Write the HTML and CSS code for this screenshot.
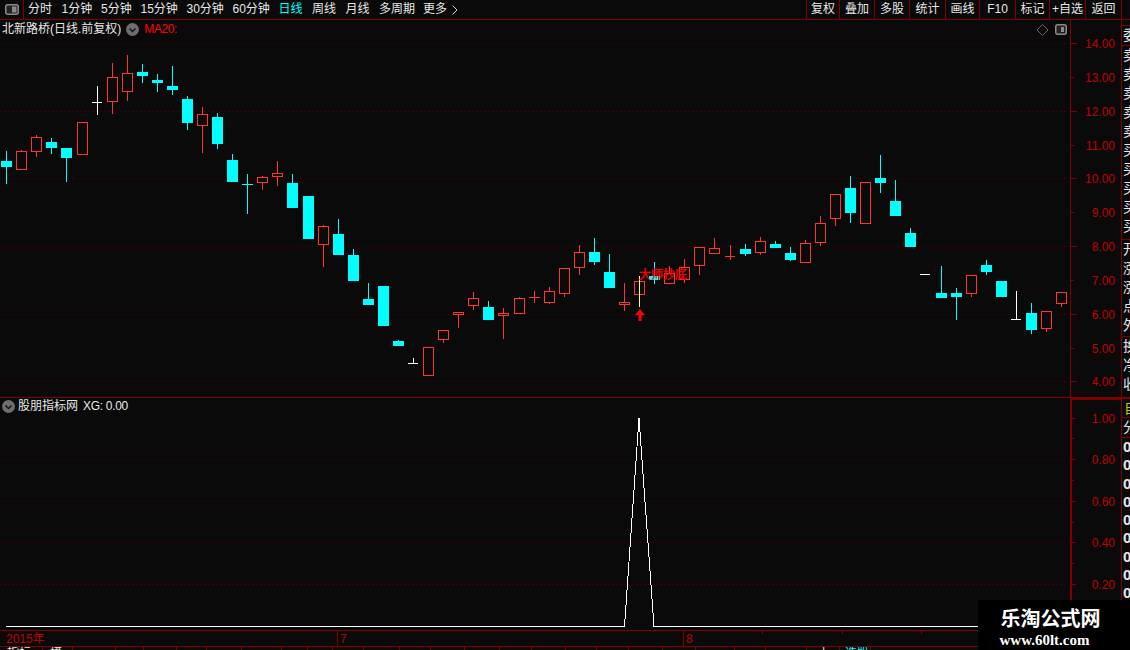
FILE: index.html
```html
<!DOCTYPE html>
<html lang="zh">
<head>
<meta charset="utf-8">
<title>北新路桥 日线</title>
<link rel="stylesheet" href="styles.css">
</head>
<body>
<div class="app">
  <header class="toolbar">
    <div class="layout-btn"><svg width="14" height="11" viewBox="0 0 14 11"><rect x="0.750" y="0.750" width="12.500" height="9.500" rx="2" class="ico-frame"/><rect x="7" y="2.500" width="4.500" height="6" class="ico-fill"/></svg></div>
    <nav class="periods">
      <span class="p p-w2">分时</span><span class="p p-w3">1分钟</span><span class="p p-w3">5分钟</span><span class="p p-w4">15分钟</span><span class="p p-w4">30分钟</span><span class="p p-w4">60分钟</span><span class="p p-w2 active">日线</span><span class="p p-w2">周线</span><span class="p p-w2">月线</span><span class="p p-w3b">多周期</span><span class="p more">更多<svg class="more-ico" width="6" height="10" viewBox="0 0 6 10"><path d="M0.500 0.500L5 5L0.500 9.500"/></svg></span>
    </nav>
    <nav class="actions">
      <span class="a">复权</span><span class="a">叠加</span><span class="a">多股</span><span class="a">统计</span><span class="a">画线</span><span class="a">F10</span><span class="a">标记</span><span class="a">+自选</span><span class="a">返回</span>
    </nav>
    <div class="corner"></div>
  </header>

  <div class="workspace">
    <div class="charts">
      <section class="pane pane-main">
        <svg class="plot" width="1121" height="377" viewBox="0 20 1121 377">
          <path class="grid" d="M0 43.500H1068M0 111.500H1068M0 178.500H1068M0 246.500H1068M0 314.500H1068M0 381.500H1068"/>
          <path class="wick-up" d="M21.500 150V170M36.500 135V157M112.500 63V114M127.500 55V101M202.500 107V153M262.500 176V190M277.500 161V186M323.500 225V267M443.500 330V343M458.500 312V328M473.500 292V310M503.500 308V339M519.500 297V314M534.500 291V303M549.500 287V304M564.500 268V297M579.500 245V275M624.500 283V311M669.500 266V284M684.500 259V283M699.500 247V275M714.500 238V254M730.500 245V260M760.500 237V255M805.500 240V263M820.500 216V246M835.500 194V226M971.500 275V297M1046.500 311V332M1061.500 292V307"/>
          <path class="wick-dn" d="M6.500 151V184M51.500 138V154M66.500 148V182M142.500 64V83M157.500 74V92M172.500 66V95M187.500 96V130M217.500 113V149M232.500 154V182M247.500 174V214M292.500 174V208M338.500 219V255M353.500 249V281M368.500 283V305M398.500 340V346M488.500 301V320M594.500 238V265M609.500 254V288M654.500 262V284M745.500 244V256M775.500 241V248M790.500 247V261M850.500 176V223M880.500 155V193M895.500 180V216M910.500 228V247M941.500 266V298M956.500 288V320M986.500 260V275M1031.500 303V334"/>
          <path class="wick-flat" d="M97.500 86V115M413.500 358V363M1016.500 291V319"/>
          <path class="cross-flat" d="M92 102.500H102M408 363.500H418M920 274.500H930M1011 319.500H1021"/>
          <path class="cross-dn" d="M242 184.500H253"/>
          <path class="cross-up" d="M529 297.500H540M725 256.500H735"/>
          <g class="body-up">
            <rect x="16.500" y="151.500" width="10" height="18"/><rect x="31.500" y="137.500" width="10" height="14"/><rect x="77.500" y="122.500" width="10" height="32"/><rect x="107.500" y="77.500" width="10" height="24"/><rect x="122.500" y="73.500" width="10" height="18"/><rect x="197.500" y="114.500" width="10" height="11"/><rect x="257.500" y="177.500" width="10" height="5"/><rect x="272.500" y="173.500" width="10" height="3"/><rect x="318.500" y="226.500" width="10" height="18"/><rect x="423.500" y="347.500" width="10" height="28"/><rect x="438.500" y="330.500" width="10" height="9"/><rect x="453.500" y="312.500" width="10" height="2"/><rect x="468.500" y="298.500" width="10" height="7"/><rect x="498.500" y="313.500" width="10" height="2"/><rect x="514.500" y="298.500" width="10" height="15"/><rect x="544.500" y="291.500" width="10" height="11"/><rect x="559.500" y="268.500" width="10" height="25"/><rect x="574.500" y="252.500" width="10" height="15"/><rect x="619.500" y="302.500" width="10" height="2"/><rect x="634.500" y="281.500" width="10" height="13"/><rect x="664.500" y="273.500" width="10" height="10"/><rect x="679.500" y="267.500" width="10" height="12"/><rect x="694.500" y="247.500" width="10" height="18"/><rect x="709.500" y="248.500" width="10" height="5"/><rect x="755.500" y="241.500" width="10" height="11"/><rect x="800.500" y="243.500" width="10" height="19"/><rect x="815.500" y="223.500" width="10" height="19"/><rect x="830.500" y="194.500" width="10" height="24"/><rect x="860.500" y="182.500" width="10" height="41"/><rect x="966.500" y="275.500" width="10" height="18"/><rect x="1041.500" y="311.500" width="10" height="17"/><rect x="1056.500" y="292.500" width="10" height="11"/>
          </g>
          <g class="body-dn">
            <rect x="1" y="161" width="11" height="6"/><rect x="46" y="142" width="11" height="6"/><rect x="61" y="148" width="11" height="10"/><rect x="137" y="72" width="11" height="4"/><rect x="152" y="80" width="11" height="3"/><rect x="167" y="86" width="11" height="4"/><rect x="182" y="99" width="11" height="24"/><rect x="212" y="117" width="11" height="27"/><rect x="227" y="160" width="11" height="22"/><rect x="287" y="183" width="11" height="25"/><rect x="303" y="196" width="11" height="43"/><rect x="333" y="234" width="11" height="21"/><rect x="348" y="255" width="11" height="26"/><rect x="363" y="299" width="11" height="6"/><rect x="378" y="286" width="11" height="40"/><rect x="393" y="341" width="11" height="5"/><rect x="483" y="307" width="11" height="13"/><rect x="589" y="252" width="11" height="10"/><rect x="604" y="272" width="11" height="16"/><rect x="649" y="276" width="11" height="4"/><rect x="740" y="249" width="11" height="5"/><rect x="770" y="244" width="11" height="4"/><rect x="785" y="253" width="11" height="7"/><rect x="845" y="188" width="11" height="25"/><rect x="875" y="178" width="11" height="5"/><rect x="890" y="201" width="11" height="15"/><rect x="905" y="233" width="11" height="14"/><rect x="936" y="293" width="11" height="5"/><rect x="951" y="293" width="11" height="4"/><rect x="981" y="265" width="11" height="7"/><rect x="996" y="281" width="11" height="16"/><rect x="1026" y="313" width="11" height="17"/>
          </g>
          <path class="wick-signal" d="M639.500 276V307"/>
          <path class="arrow" d="M640 309L645 315H641.500V321H638.500V315H635Z"/>
          <text class="signal" x="639" y="279">大师抄底</text>
          <path class="axis" d="M1070.500 20V397"/>
          <path class="tick" d="M1071 43.500H1077M1071 77.500H1074M1071 111.500H1077M1071 145.500H1074M1071 178.500H1077M1071 212.500H1074M1071 246.500H1077M1071 280.500H1074M1071 314.500H1077M1071 348.500H1074M1071 381.500H1077"/>
          <g class="ylabel">
            <text x="1115" y="48">14.00</text><text x="1115" y="82">13.00</text><text x="1115" y="116">12.00</text><text x="1115" y="150">11.00</text><text x="1115" y="183">10.00</text><text x="1115" y="217">9.00</text><text x="1115" y="251">8.00</text><text x="1115" y="285">7.00</text><text x="1115" y="319">6.00</text><text x="1115" y="353">5.00</text><text x="1115" y="386">4.00</text>
          </g>
          <path class="diamond" d="M1042.500 24.500L1048 30L1042.500 35.500L1037 30Z"/>
          <rect class="ico-frame" x="1055.750" y="24.750" width="10.500" height="9.500" rx="2"/>
          <rect class="ico-fill" x="1061" y="27" width="3" height="5"/>
        </svg>
        <div class="legend">
          <span class="legend-title">北新路桥(日线.前复权)</span>
          <svg class="chev" width="13" height="13" viewBox="0 0 13 13"><circle cx="6.500" cy="6.500" r="6.500"/><path d="M3.500 5.500L6.500 8.500L9.500 5.500"/></svg>
          <span class="legend-ma">MA20:</span>
        </div>
      </section>

      <section class="pane pane-sub">
        <svg class="plot" width="1121" height="232" viewBox="0 398 1121 232">
          <path class="grid" d="M0 459.500H1068M0 501.500H1068M0 542.500H1068M0 584.500H1068"/>
          <path class="curve" d="M6 626.500H624.500L639 418L654 626.500H978"/>
          <path class="axis-thick" d="M1071 398V630M1070 399H1121"/>
          <path class="tick" d="M1072 418.500H1076M1072 438.500H1074M1072 459.500H1076M1072 480.500H1074M1072 501.500H1076M1072 522.500H1074M1072 542.500H1076M1072 563.500H1074M1072 584.500H1076M1072 605.500H1074"/>
          <g class="ylabel">
            <text x="1115" y="423">1.00</text><text x="1115" y="464">0.80</text><text x="1115" y="506">0.60</text><text x="1115" y="547">0.40</text><text x="1115" y="589">0.20</text>
          </g>
        </svg>
        <div class="legend legend-sub">
          <svg class="chev" width="13" height="13" viewBox="0 0 13 13"><circle cx="6.500" cy="6.500" r="6.500"/><path d="M3.500 5.500L6.500 8.500L9.500 5.500"/></svg>
          <span class="legend-title">股朋指标网</span>
          <span class="legend-val">XG: 0.00</span>
        </div>
      </section>

      <div class="dates">
        <span class="date date-y">2015年</span><span class="date date-7">7</span><span class="date date-8">8</span>
        <svg class="date-ticks" width="1121" height="3" viewBox="0 0 1121 3"><path d="M762.500 0V3M842.500 0V3M921.500 0V3"/></svg>
      </div>
      <div class="tabs">
        <span class="tab">指标</span><span class="tab">模</span><span class="tab"></span><span class="tab"></span><span class="tab"></span><span class="tab"></span><span class="tab"></span><span class="tab"></span><span class="tab"></span><span class="tab"></span><span class="tab"></span><span class="tab"></span><span class="tab"></span><span class="tab"></span><span class="tab"></span><span class="tab"></span><span class="tab"></span><span class="tab"></span><span class="tab"></span><span class="tab"></span><span class="tab"></span><span class="tab"></span><span class="tab"></span><span class="tab"></span><span class="tab tab-r">上</span><span class="tab tab-on">选股</span>
      </div>
    </div>

    <aside class="side">
      <div class="side-block side-a"><span>委</span></div>
      <div class="side-block side-b"><span>卖</span><span>卖</span><span>卖</span><span>卖</span><span>卖</span><span>买</span><span>买</span><span>买</span><span>买</span><span>买</span></div>
      <div class="side-block side-c"><span>开</span><span>涨</span><span>涨</span><span>点</span><span>外</span></div>
      <div class="side-block side-d"><span>换</span><span>净</span><span>收</span></div>
      <div class="side-tag">自</div>
      <div class="side-block side-e"><span>分</span></div>
      <div class="side-nums"><span>0</span><span>0</span><span>0</span><span>0</span><span>0</span><span>0</span><span>0</span><span>0</span><span>0</span></div>
    </aside>
  </div>

  <div class="watermark">
    <div class="wm-cn">乐淘公式网</div>
    <div class="wm-url">www.60lt.com</div>
  </div>
</div>
</body>
</html>
```
FILE: styles.css
```css
* { box-sizing: border-box; }
html, body { margin: 0; padding: 0; background: #0a0a0a; }
body { font-family: "Liberation Sans", "Noto Sans CJK SC", sans-serif; font-size: 12px; color: #e6e6e6; overflow: hidden; }
.app { position: relative; width: 1130px; height: 650px; overflow: hidden; display: flex; flex-direction: column; background: #0a0a0a; }

/* toolbar */
.toolbar { display: flex; height: 20px; flex: none; border-bottom: 1px solid #800000; }
.layout-btn { width: 24px; border-right: 1px solid #800000; display: flex; align-items: center; justify-content: center; }
.ico-frame { fill: #222; stroke: #8a8a8a; stroke-width: 1.5; }
.ico-fill { fill: #8a8a8a; }
.periods { display: flex; flex: 1; padding-left: 4px; line-height: 19px; white-space: nowrap; }
.p { display: block; }
.p-w2 { width: 33.500px; }
.p-w3 { width: 39.500px; }
.p-w4 { width: 46px; }
.p-w3b { width: 44px; }
.active { color: #00ffff; }
.more { display: flex; align-items: center; gap: 5px; }
.more-ico { display: block; }
.more-ico path { fill: none; stroke: #d8d8d8; stroke-width: 1; }
.actions { display: grid; grid-template-columns: 33px 35px 35px 36px 34px 36px 34px 36px 36px; height: 19px; line-height: 18px; border-left: 1px solid #800000; }
.a { text-align: center; border-right: 1px solid #800000; white-space: nowrap; }
.corner { width: 8px; }

/* workspace */
.workspace { display: flex; flex: 1; min-height: 0; }
.charts { width: 1121px; flex: none; display: flex; flex-direction: column; }
.pane { position: relative; flex: none; }
.pane-main { height: 378px; border-bottom: 1px solid #800000; }
.pane-sub { height: 232px; }
.plot { display: block; }
.legend { position: absolute; left: 2px; top: 1px; height: 16px; display: flex; align-items: center; gap: 5px; white-space: nowrap; line-height: 16px; }
.legend-sub { top: 0; gap: 3px; }
.legend-ma { color: #ff0000; letter-spacing: -0.400px; }
.legend-val { margin-left: 2px; letter-spacing: -0.300px; }
.chev circle { fill: #6e6e6e; }
.chev path { fill: none; stroke: #141414; stroke-width: 1.5; }

/* chart marks */
.grid { stroke: #580000; stroke-width: 1; stroke-dasharray: 1 3; fill: none; }
.wick-up { stroke: #ff3333; stroke-width: 1; fill: none; }
.wick-dn { stroke: #00ffff; stroke-width: 1; fill: none; }
.wick-flat { stroke: #ffffff; stroke-width: 1; fill: none; }
.cross-flat { stroke: #ffffff; stroke-width: 1; fill: none; }
.cross-dn { stroke: #00ffff; stroke-width: 1; fill: none; }
.cross-up { stroke: #ff3333; stroke-width: 1; fill: none; }
.body-up rect { fill: #0a0a0a; stroke: #ff3333; stroke-width: 1; }
.body-dn rect { fill: #00ffff; }
.wick-signal { stroke: #ffff66; stroke-width: 1; fill: none; }
.arrow { fill: #ff0000; }
.signal { fill: #ff0000; stroke: #ff0000; stroke-width: 0.300px; font-size: 12px; }
.axis { stroke: #800000; stroke-width: 1; fill: none; }
.axis-thick { stroke: #800000; stroke-width: 2; fill: none; }
.tick { stroke: #800000; stroke-width: 1; fill: none; }
.ylabel text { fill: #c00000; font-size: 12px; text-anchor: end; }
.diamond { fill: none; stroke: #666; stroke-width: 1; }
.curve { fill: none; stroke: #ffffff; stroke-width: 1; shape-rendering: crispEdges; }

/* dates + tabs */
.dates { position: relative; height: 17px; flex: none; border-top: 1px solid #800000; border-bottom: 1px solid #800000; color: #c00000; line-height: 17px; display: flex; }
.date { display: block; border-left: 1px solid #800000; padding-left: 2px; }
.date-y { width: 337px; border-left: 0; padding-left: 6px; }
.date-7 { width: 346px; }
.date-8 { flex: 1; }
.date-ticks { position: absolute; left: 0; top: 0; }
.date-ticks path { stroke: #800000; stroke-width: 1; fill: none; }
.tabs { display: grid; height: 3px; flex: none; overflow: hidden; grid-template-columns: 43px 30px 43px 28px 33px 30px 35px 40px 26px 25px 31px 36px 31px 34px 35px 32px 34px 31px 32px 34px 33px 39px 31px 41px 33px 31px; }
.tab { display: block; border-right: 1px solid #800000; line-height: 13px; height: 3px; overflow: hidden; padding-left: 7px; white-space: nowrap; }
.tab-r { padding-left: 11px; }
.tab-on { color: #00ffff; padding-left: 5px; }

/* side panel */
.side { width: 9px; flex: none; overflow: hidden; border-left: 1px solid #800000; display: flex; flex-direction: column; font-size: 14px; color: #e6e6e6; padding-top: 5px; }
.side-block { display: flex; flex-direction: column; flex: none; border-top: 1px solid #800000; padding-left: 1px; }
.side-block span { display: block; height: 19px; line-height: 19px; width: 15px; }
.side-a { height: 20px; }
.side-b { height: 194px; }
.side-c { height: 97px; }
.side-d { height: 61px; }
.side-tag { height: 21px; flex: none; border-top: 2px solid #800000; border-bottom: 1px solid #800000; color: #c8c800; line-height: 18px; padding-left: 2px; width: 16px; }
.side-e { height: 20px; border-top: 0; border-bottom: 1px solid #800000; }
.side-nums { display: flex; flex-direction: column; padding-left: 1px; font-weight: 700; }
.side-nums span { display: block; height: 18.300px; line-height: 18px; font-size: 15px; }

/* watermark */
.watermark { position: absolute; left: 978px; top: 600px; width: 152px; height: 50px; background: #000; font-family: "Liberation Serif", "Noto Sans CJK SC", serif; font-weight: 700; color: #fff; display: flex; flex-direction: column; align-items: center; padding: 7px 0 0 0; }
.wm-cn { font-size: 20px; line-height: 24px; margin-left: -7px; }
.wm-url { font-size: 15px; line-height: 15px; margin-top: 2px; margin-left: -19px; }
```
